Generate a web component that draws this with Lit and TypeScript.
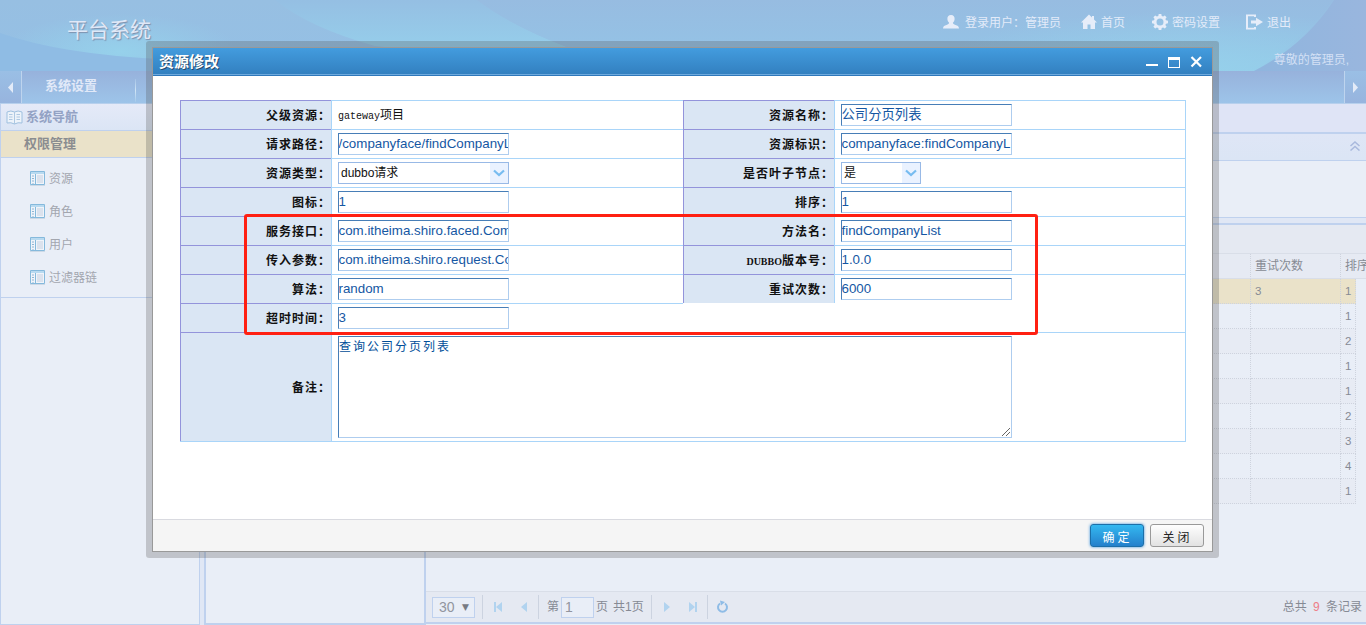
import { LitElement, html, css, svg, nothing } from "lit";
import { customElement } from "lit/decorators.js";

type Field = { kind: "text" | "input" | "select" | "short"; label: string; value: string };

const ROWS: Field[][] = [
  [{ kind: "text", label: "父级资源", value: "gateway" }, { kind: "input", label: "资源名称", value: "公司分页列表" }],
  [{ kind: "input", label: "请求路径", value: "/companyface/findCompanyL" }, { kind: "input", label: "资源标识", value: "companyface:findCompanyL" }],
  [{ kind: "select", label: "资源类型", value: "dubbo请求" }, { kind: "short", label: "是否叶子节点", value: "是" }],
  [{ kind: "input", label: "图标", value: "1" }, { kind: "input", label: "排序", value: "1" }],
  [{ kind: "input", label: "服务接口", value: "com.itheima.shiro.faced.Com" }, { kind: "input", label: "方法名", value: "findCompanyList" }],
  [{ kind: "input", label: "传入参数", value: "com.itheima.shiro.request.Co" }, { kind: "input", label: "DUBBO版本号", value: "1.0.0" }],
  [{ kind: "input", label: "算法", value: "random" }, { kind: "input", label: "重试次数", value: "6000" }],
  [{ kind: "input", label: "超时时间", value: "3" }],
];

const ICONS = {
  user: svg`<path d="M8 1c2.600 0 3.800 1.700 3.600 4-.1 1.700-.8 3-1.700 3.800.1 1.200 1 1.700 2.600 2.200 2 .6 3.300 1.200 3.500 3.500H0c.2-2.300 1.500-2.900 3.500-3.500C5.100 10.500 6 10 6.100 8.800 5.200 8 4.500 6.700 4.400 5 4.200 2.700 5.400 1 8 1z"/>`,
  home: svg`<path d="M8 .5 0 8.500h2V15h4.500v-4.500h3V15H14V8.500h2L13 5.500V2h-2v1.500z"/>`,
  gear: svg`<path fill-rule="evenodd" d="M6.700 0h2.600l.4 2 1.400.6L12.800 1.400l1.800 1.800-1.200 1.700.6 1.400 2 .4v2.600l-2 .4-.6 1.400 1.200 1.700-1.800 1.800-1.700-1.200-1.400.6-.4 2H6.700l-.4-2-1.400-.6-1.700 1.200-1.800-1.800 1.200-1.700L2 9.700l-2-.4V6.700l2-.4.600-1.400L1.400 3.200l1.800-1.800 1.700 1.200L6.300 2zM8 4.500a3.500 3.500 0 1 0 0 7 3.500 3.500 0 0 0 0-7z"/>`,
  exit: svg`<path d="M10 .5H0v15h10V13H8v.7H2V2.300h6V3h2zM5 6.500h5V3.800L17 8l-7 4.200V9.500H5z"/>`,
};

@customElement("app-root")
export class AppRoot extends LitElement {
  static styles = css`
    :host { display: block; position: relative; width: 1366px; height: 625px; overflow: hidden;
      font: 12px/16px "Liberation Sans", "Noto Sans CJK SC", sans-serif; color: #868a94; }
    * { box-sizing: border-box; }
    svg { display: block; flex: none; }
    .page { display: flex; flex-direction: column; height: 625px; background: #dfe6f5; }
    .banner { position: relative; height: 71px; flex: none; display: flex; justify-content: space-between; overflow: hidden; }
    .wash { position: absolute; inset: 0; }
    .brand { position: relative; margin: 15px 0 0 67px; font-size: 21px; line-height: 30px; color: #e0e8f7; text-shadow: 1px 1px 1px #7c90ad; }
    .account { position: relative; display: flex; flex-direction: column; width: 423px; color: #e3ebf9; }
    .links { display: flex; height: 17px; margin-top: 14px; fill: #e6edf9; }
    .link { display: flex; gap: 3px; white-space: nowrap; line-height: 18px; }
    .l1 { width: 138px; gap: 5px; } .l2 { width: 71px; } .l3 { width: 94px; } .l4 { gap: 4px; }
    .greet { margin: 21px 17px 0 0; align-self: flex-end; color: #d3e0f5; white-space: nowrap; }
    .tabs { height: 33px; flex: none; display: flex; background: linear-gradient(#97b2dc, #9dc4e9); border-bottom: 1px solid #b7d0ed; }
    .arrow { display: flex; align-items: center; justify-content: center; width: 22px; fill: #e3ebf8; background: linear-gradient(#9abfe5, #97b4de); }
    .arrow.prev { border-right: 1px solid #bed4ee; }
    .arrow.next { border-left: 1px solid #bed4ee; margin-left: auto; }
    .tab { width: 113px; padding: 7px 0 0 23px; font-weight: bold; font-size: 13px; color: #e1e9f8; height: 31px; }
    .tab-end { width: 1px; height: 23px; margin-top: 8px; background: linear-gradient(#a4c3e6, #cfe4f5, #a4c9ea); }
    .body { display: flex; flex: 1; min-height: 0; background: #e0e7f5; }
    .side { width: 200px; border: 1px solid #bfd1ee; border-top: 0; background: #e9eef7; }
    .nav { height: 27px; display: flex; align-items: center; gap: 3px; padding-left: 5px; font-size: 13px; font-weight: bold; color: #93a2c4;
      background: linear-gradient(#e5eaf8, #dbe5f5); border-bottom: 1px solid #bfd1ee; }
    .group { height: 27px; padding: 5px 0 0 23px; font-weight: bold; font-size: 13px; background: #eae2c9; border-bottom: 1px solid #bfd1ee; color: #8b8d90; }
    .menu { height: 140px; padding: 4px 0 0 28px; border-bottom: 1px solid #bfd1ee; }
    .item { height: 33px; display: flex; align-items: center; gap: 3px; font-size: 12px; color: #a3a6af; }
    .tree { width: 220px; margin-left: 4px; border: 2px solid #bfd1ee; border-top: 0; border-right: 0; background: #e9eef7; }
    .work { flex: 1; display: flex; flex-direction: column; border-left: 2px solid #bfd1ee; background: #e9eef7; min-width: 0; }
    .strip { height: 28px; background: #dfe4f6; }
    .query { height: 29px; border-top: 2px solid #bfd1ee; border-bottom: 1px solid #bfd1ee; background: linear-gradient(#dfe6f6, #dbe5f5); display: flex; justify-content: flex-end; align-items: center; padding: 0 6px 2px 0; }
    .blank { height: 57px; border-bottom: 1px solid #bfd1ee; }
    .gap { height: 7px; background: #e0e7f5; border-bottom: 2px solid #bfd1ee; }
    .tools { height: 29px; background: #e5e9f2; border-bottom: 1px solid #d9dee8; }
    .grid { display: grid; grid-template-columns: 825px 90px 15px 10px; }
    .cell { height: 25px; line-height: 25px; font-size: 11.500px; padding-left: 4px; border-bottom: 1px dotted #ced3de; border-right: 1px dotted #ced3de; white-space: nowrap; }
    .head { background: #e6eaf3; border-bottom: 1px solid #d9dee8; font-size: 12px; }
    .head.last { grid-column: span 2; border-right: 0; }
    .lit { background: #eae2c9; }
    .alt { background: #e7ebf4; }
    .pager { margin: auto 0 1px; height: 33px; display: flex; align-items: center; background: #e5e9f2; border-top: 1px solid #d9dee8; border-bottom: 2px solid #bfd1ee; }
    .size { width: 43px; height: 21px; margin-left: 6px; border: 1px solid #bfd1ee; background: #e9eef7; display: flex; align-items: center; justify-content: space-between; padding: 0 5px 0 6px; font-size: 14px; color: #92959e; }
    .tri { font-size: 9px; font-family: "DejaVu Sans"; color: #787b83; }
    .nav-ic { fill: #b1d3ef; }
    .nth { margin: 0 2px 0 8px; }
    .unit { margin: 0 5px 0 2px; }
    .num { width: 33px; height: 21px; border: 1px solid #bfd1ee; background: #e9eef7; padding: 1px 3px; font-size: 14px; color: #92959e; }
    .total { margin: 0 4px 0 auto; }
    .red { color: #ee7d86; margin: 0 3px; }
    .frame { position: absolute; left: 146px; top: 41px; width: 1073px; height: 517px; padding: 6px; border-radius: 3px; background: rgba(80, 80, 80, .27); }
    .dialog { width: 1061px; height: 505px; border: 1px solid #999; background: #fff; display: flex; flex-direction: column; }
    .title { height: 28px; flex: none; display: flex; align-items: center; padding: 0 8px 0 6px; background: linear-gradient(#439cde, #327fbf); border-bottom: 1px solid #2f78bb; box-shadow: inset 0 -1px #6eaade; color: #fff; font-size: 15px; font-weight: bold; text-shadow: 1px 1px 0 #254a6c; }
    .wins { margin-left: auto; }
    .content { flex: 1; padding: 24px 0 0 27px; }
    .form { width: 1006px; display: grid; grid-template-columns: 151px 352px 151px 351px; grid-template-rows: repeat(8, 29px) 109px; border-right: 1px solid #a9d5f9; border-bottom: 1px solid #a9d5f9; }
    .lab { border-left: 1px solid #9394db; border-top: 1px solid #9394db; background: #dae6f4; color: #111; font-weight: bold; text-align: right; letter-spacing: 1px; line-height: 30px; height: 29px; white-space: nowrap; }
    .latin { font-family: "Liberation Serif", serif; font-size: 10px; letter-spacing: 0; }
    .val { border-left: 1px solid #a9d5f9; border-top: 1px solid #a9d5f9; padding: 3px 0 0 6px; color: #111; min-width: 0; }
    .open { border-top: 0; border-left: 0; grid-column: span 2; }
    .input { width: 171px; height: 22px; border: 1px solid; border-color: #477eb7 #aecdef #aecdef #477eb7; font-size: 13.333px; line-height: 20px; text-indent: -.5px; color: #1557a3; white-space: nowrap; overflow: hidden; }
    .plain { line-height: 23px; }
    .mono { font: 10px "Liberation Mono", monospace; }
    .select { width: 171px; height: 22px; border: 1px solid #98b9e6; display: flex; font-size: 12px; line-height: 20px; padding-left: 2px; justify-content: space-between; }
    .select.short { width: 80px; }
    .drop { width: 18px; background: #eaf2ff; display: flex; align-items: center; justify-content: center; }
    .lab.note-lab { line-height: 110px; height: 109px; }
    .note-val { grid-column: span 3; }
    .area { width: 674px; height: 102px; border: 1px solid; border-color: #477eb7 #aecdef #aecdef #477eb7; color: #004d99; letter-spacing: 2px; padding-top: 1px; line-height: 18px; display: flex; justify-content: space-between; }
    .grip { align-self: flex-end; }
    .foot { height: 32px; flex: none; border-top: 1px solid #d9dae0; background: #f5f5f5; display: flex; justify-content: flex-end; gap: 6px; padding: 4px 8px 0 0; }
    .btn { width: 54px; height: 23px; border: 1px solid #999; border-radius: 3px; background: linear-gradient(#fefefe, #e2e2e2); text-align: center; letter-spacing: 3px; padding-left: 1px; line-height: 26px; font-size: 12px; color: #222; }
    .ok { border-color: #1c6fa8; background: linear-gradient(#34b8f0, #2480cc); color: #fff; box-shadow: 0 0 3px #3b92dc; }
    .mark { position: absolute; left: 244px; top: 214px; width: 794px; height: 121px; border: 3px solid #ff2012; border-radius: 3px; }
  `;

  private icon(name: keyof typeof ICONS) {
    return html`<svg width="17" height="16" viewBox="0 0 17 16">${ICONS[name]}</svg>`;
  }

  private value(f: Field) {
    if (f.kind === "text") return html`<div class="plain"><span class="mono">${f.value}</span>项目</div>`;
    if (f.kind === "input") return html`<div class="input">${f.value}</div>`;
    return html`<div class="select ${f.kind}">${f.value}<span class="drop">
      <svg width="12" height="8" viewBox="0 0 12 8" fill="none" stroke="#77bcf0" stroke-width="2.200"><path d="M1 1.500 6 6l5-4.500"/></svg></span></div>`;
  }

  private label(text: string) {
    return html`<div class="lab">${text.startsWith("DUBBO") ? html`<span class="latin">DUBBO</span>${text.slice(5)}` : text}：</div>`;
  }

  private menuIcon() {
    return html`<svg width="17" height="17" viewBox="0 0 17 17"><path d="M1.500 1.500h14v13h-14z" fill="#f0f4fa" stroke="#85b9dc"/><path d="M2 2h13v2H2z" fill="#b9daf0"/>
      <path d="M6.500 4v11" stroke="#85b9dc"/><path d="M8 5h6v8H8z" fill="#dbe2ed"/><path d="M4 5.500v8" stroke="#91b6d4" stroke-dasharray="1 1.500" stroke-width="2"/><path d="M1 15.500h15" stroke="#cdd9e6"/></svg>`;
  }

  render() {
    const order = ["1", "1", "2", "1", "1", "2", "3", "4", "1"];
    return html`
      <div class="page">
        <div class="banner">
          <svg class="wash" width="1366" height="71" viewBox="0 0 1366 71">
            <defs>
              <linearGradient id="sky" x2="0" y2="1"><stop stop-color="#97bfe2"/><stop offset="1" stop-color="#94c0e5"/></linearGradient>
              <linearGradient id="glow" x2="0" y2="1"><stop stop-color="#95bfe3"/><stop offset="1" stop-color="#96d5ee"/></linearGradient>
              <linearGradient id="mid" x2="0" y2="1"><stop stop-color="#97bce1"/><stop offset="1" stop-color="#93c5e7"/></linearGradient>
              <linearGradient id="far" x2="1" y2="0"><stop stop-color="#8fb5de"/><stop offset="1" stop-color="#99b6de"/></linearGradient>
              <radialGradient id="spot"><stop stop-color="#96d1eb"/><stop offset="1" stop-color="#96d1eb" stop-opacity="0"/></radialGradient>
            </defs>
            <path d="M0 0h1366v71H0z" fill="url(#sky)"/>
            <ellipse cx="120" cy="52" rx="120" ry="38" fill="url(#spot)"/>
            <path d="M0 33Q60 54 160 59V71H0z" fill="#8fbce4"/>
            <path d="M275 0Q310 28 375 46L640 71Q530 40 477 0z" fill="url(#glow)"/>
            <path d="M477 0Q530 40 640 71h614Q1305 38 1334 0z" fill="url(#mid)"/>
            <ellipse cx="1190" cy="71" rx="260" ry="60" fill="url(#spot)"/>
            <path d="M1334 0Q1305 45 1254 71h112V0z" fill="url(#far)"/>
          </svg>
          <div class="brand">平台系统</div>
          <div class="account">
            <div class="links">
              <div class="link l1">${this.icon("user")}登录用户：管理员</div>
              <div class="link l2">${this.icon("home")}首页</div>
              <div class="link l3">${this.icon("gear")}密码设置</div>
              <div class="link l4">${this.icon("exit")}退出</div>
            </div>
            <div class="greet">尊敬的管理员,</div>
          </div>
        </div>
        <div class="tabs">
          <div class="arrow prev"><svg width="6" height="11"><path d="M5 0v11L0 5.500z"/></svg></div>
          <div class="tab">系统设置</div><div class="tab-end"></div>
          <div class="arrow next"><svg width="6" height="11"><path d="M0 0v11l5-5.500z"/></svg></div>
        </div>
        <div class="body">
          <div class="side">
            <div class="nav"><svg width="17" height="15" viewBox="0 0 17 15"><path d="M1 2q4-2 7.500 0Q12 0 16 2v11q-4-1-7.500 1Q5 12 1 13z" fill="#edf3fa" stroke="#9fc0df"/><path d="M8.500 2v12M3 4.500h3.500M3 7h3.500M3 9.500h3.500M10.500 4.500H14M10.500 7H14M10.500 9.500H14" stroke="#aec8e2"/></svg>系统导航</div>
            <div class="group">权限管理</div>
            <div class="menu">${["资源", "角色", "用户", "过滤器链"].map((t) => html`<div class="item">${this.menuIcon()}${t}</div>`)}</div>
          </div>
          <div class="tree"></div>
          <div class="work">
            <div class="strip"></div>
            <div class="query"><svg width="10" height="10" fill="none" stroke="#a9b9dd" stroke-width="1.500"><path d="M.5 5 5 1l4.500 4M.5 9.500 5 5.500l4.500 4"/></svg></div>
            <div class="blank"></div><div class="gap"></div><div class="tools"></div>
            <div class="grid">
              <div class="cell head"></div><div class="cell head">重试次数</div><div class="cell head last">排序</div>
              ${order.map((n, i) => {
                const tone = i === 0 ? "lit" : i % 2 ? "" : "alt";
                return html`<div class="cell ${tone}"></div><div class="cell ${tone}">${i === 0 ? "3" : nothing}</div><div class="cell ${tone}">${n}</div><div></div>`;
              })}
            </div>
            <div class="pager">
              <div class="size">30<span class="tri">▼</span></div>
              <svg class="nav-ic" width="64" height="24"><path d="M7 0h1v24H7z" fill="#ccd3e0"/><path d="M19 7h2v10h-2zM27 7v10l-6-5zM52 7v10l-6-5z"/><path d="M63 0h1v24h-1z" fill="#ccd3e0"/></svg>
              <span class="nth">第</span><div class="num">1</div><span class="unit">页</span><span>共1页</span>
              <svg class="nav-ic" width="92" height="24"><path d="M7 0h1v24H7z" fill="#ccd3e0"/><path d="M20 7v10l6-5zM45 7v10l6-5zM51 7h2v10h-2z"/><path d="M63 0h1v24h-1z" fill="#ccd3e0"/><path d="M76 8.500a4.500 4.500 0 1 0 5 0" fill="none" stroke="#8fbce6" stroke-width="2"/><path d="M76 5.500l5 1.500-4 3.500z" fill="#8fbce6"/></svg>
              <div class="total">总共 <span class="red">9</span> 条记录</div>
            </div>
          </div>
        </div>
      </div>
      <div class="frame">
        <div class="dialog">
          <div class="title">资源修改<svg class="wins" width="58" height="14" fill="#fff"><path d="M0 9h12v2H0z"/><path fill-rule="evenodd" d="M22 2h12v11H22zM23 5v7h10V5z"/><path d="m45.500 2 9.500 9.500M55 2l-9.500 9.500" stroke="#fff" stroke-width="2.200"/></svg></div>
          <div class="content">
            <div class="form">
              ${ROWS.map((row) => html`${row.map((f) => html`${this.label(f.label)}<div class="val">${this.value(f)}</div>`)}${row.length === 1 ? html`<div class="val open"></div>` : nothing}`)}
              <div class="lab note-lab">备注：</div>
              <div class="val note-val"><div class="area">查询公司分页列表<svg class="grip" width="10" height="10" stroke="#666" stroke-width="1"><path d="M1 9 9 1M5 9l4-4"/></svg></div></div>
            </div>
          </div>
          <div class="foot"><div class="btn ok">确定</div><div class="btn">关闭</div></div>
        </div>
      </div>
      <div class="mark"></div>`;
  }
}
